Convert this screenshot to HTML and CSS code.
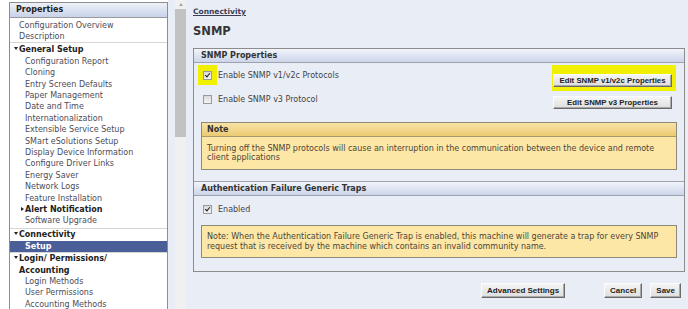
FILE: index.html
```html
<!DOCTYPE html>
<html lang="en">
<head>
    <meta charset="UTF-8" />
    <title>SNMP - Connectivity</title>
    <link rel="stylesheet" href="styles.css">
</head>
<body>

    <div class="side">
        <div class="side-box">
            <div class="side-title">Properties</div>

            <div class="side-sect sect-first">
                <a class="item">Configuration Overview</a>
                <a class="item">Description</a>
            </div>

            <div class="side-sect sect-general">
                <a class="grp">General Setup</a>
                <a class="item sub">Configuration Report</a>
                <a class="item sub">Cloning</a>
                <a class="item sub">Entry Screen Defaults</a>
                <a class="item sub">Paper Management</a>
                <a class="item sub">Date and Time</a>
                <a class="item sub">Internationalization</a>
                <a class="item sub">Extensible Service Setup</a>
                <a class="item sub">SMart eSolutions Setup</a>
                <a class="item sub">Display Device Information</a>
                <a class="item sub">Configure Driver Links</a>
                <a class="item sub">Energy Saver</a>
                <a class="item sub">Network Logs</a>
                <a class="item sub">Feature Installation</a>
                <a class="grp grp-closed">Alert Notification</a>
                <a class="item sub">Software Upgrade</a>
            </div>

            <div class="side-sect sect-tight">
                <a class="grp">Connectivity</a>
                <a class="item sub selected">Setup</a>
            </div>

            <div class="side-sect sect-tight">
                <a class="grp grp-wrap">Login/ Permissions/<br>Accounting</a>
                <a class="item sub">Login Methods</a>
                <a class="item sub">User Permissions</a>
                <a class="item sub">Accounting Methods</a>
            </div>
        </div>
    </div>

    <div class="gutter">
        <div class="scroll">
            <div class="scroll-up"></div>
            <div class="scroll-thumb"></div>
        </div>
    </div>

    <div class="main">
        <div class="crumb"><a href="#">Connectivity</a></div>
        <h1>SNMP</h1>

        <div class="panel">
            <div class="panel-head">SNMP Properties</div>
            <div class="panel-body">
                <div class="opt-row">
                    <label class="opt">
                        <span class="hl hl-box"><input type="checkbox" class="chk" checked></span>
                        <span class="opt-text">Enable SNMP v1/v2c Protocols</span>
                    </label>
                    <span class="hl hl-btn"><button class="btn btn-wide">Edit SNMP v1/v2c Properties</button></span>
                </div>
                <div class="opt-row row-second">
                    <label class="opt opt-plain">
                        <input type="checkbox" class="chk">
                        <span>Enable SNMP v3 Protocol</span>
                    </label>
                    <button class="btn btn-wide btn-second">Edit SNMP v3 Properties</button>
                </div>

                <div class="note">
                    <div class="note-head">Note</div>
                    <div class="note-body">Turning off the SNMP protocols will cause an interruption in the communication between the device and remote client applications</div>
                </div>
            </div>

            <div class="panel-head head-split">Authentication Failure Generic Traps</div>
            <div class="panel-body body-traps">
                <label class="opt opt-plain">
                    <input type="checkbox" class="chk" checked>
                    <span>Enabled</span>
                </label>

                <div class="note note-traps">
                    <div class="note-body">Note: When the Authentication Failure Generic Trap is enabled, this machine will generate a trap for every SNMP request that is received by the machine which contains an invalid community name.</div>
                </div>
            </div>
        </div>

        <div class="actions">
            <button class="btn btn-adv">Advanced Settings</button>
            <button class="btn btn-cancel">Cancel</button>
            <button class="btn btn-save">Save</button>
        </div>
    </div>

</body>
</html>
```
FILE: styles.css
```css
body {
    margin: 0;
    height: 100vh;
    overflow: hidden;
    display: flex;
    background-color: #e9edf6;
    font-family: "DejaVu Sans", Verdana, sans-serif;
    font-size: 8px;
    color: #444;
}

/* left navigation */
.side {
    flex-shrink: 0;
    width: 159px;
    padding: 2px 0 0 9px;
    background-color: #fff;
}

.side-box {
    box-sizing: border-box;
    height: 100%;
    border: 1px solid #8e8e8e;
    border-bottom: none;
}

.side-title {
    height: 14px;
    line-height: 14px;
    padding-left: 6px;
    font-weight: bold;
    color: #222;
    background: linear-gradient(#eef1f8, #c8d2e9);
    border-bottom: 1px solid #9a9a9a;
}

.sect-first {
    padding-top: 1.5px;
}

.side-sect + .side-sect {
    border-top: 1px solid #d6d6d6;
    padding-top: 1px;
}

.sect-general {
    padding-bottom: 1.5px;
}

.side-sect.sect-tight {
    padding-top: 0;
}

.item,
.grp {
    display: block;
    line-height: 11.4px;
    white-space: nowrap;
    cursor: pointer;
}

.item {
    padding-left: 9px;
    color: #4c4c58;
}

.item.sub {
    padding-left: 15px;
}

.item.selected {
    background-color: #4a5e98;
    color: #fff;
    font-weight: bold;
}

.grp {
    padding-left: 4px;
    font-weight: bold;
    color: #222;
}

.grp::before {
    content: "";
    display: inline-block;
    vertical-align: 2px;
    margin-right: 1px;
    border-left: 2px solid transparent;
    border-right: 2px solid transparent;
    border-top: 3px solid #222;
}

.grp-closed {
    padding-left: 11px;
}

.grp-closed::before {
    vertical-align: 1px;
    border-top: 2px solid transparent;
    border-bottom: 2px solid transparent;
    border-left: 3px solid #222;
    border-right: none;
}

.grp-wrap {
    padding-left: 9px;
    text-indent: -5px;
}

/* fake scrollbar between nav and content */
.gutter {
    flex-shrink: 0;
    padding: 0 7px;
}

.scroll {
    width: 11px;
    height: 100%;
    background-color: #f0f0f0;
}

.scroll-up {
    height: 9px;
    display: flex;
    justify-content: center;
    align-items: center;
}

.scroll-up::before {
    content: "";
    border-left: 2px solid transparent;
    border-right: 2px solid transparent;
    border-bottom: 3px solid #a6a6a6;
}

.scroll-thumb {
    height: 128px;
    background-color: #c2c2c2;
}

/* content */
.main {
    flex: 1;
    padding-right: 3px;
}

.crumb {
    padding-top: 6px;
    line-height: 11px;
    font-size: 7.5px;
    font-weight: bold;
}

.crumb a {
    color: #3d3d55;
}

h1 {
    margin: 7px 0 10px;
    font-size: 11.5px;
    line-height: 14px;
    color: #363636;
}

.panel {
    border: 1px solid #8c8c8c;
}

.panel-head {
    line-height: 13px;
    padding-left: 7px;
    font-weight: bold;
    color: #333;
    background: linear-gradient(#f2f4fa, #ccd5ea);
    border-bottom: 1px solid #9ea3ad;
}

.head-split {
    border-top: 1px solid #9ea3ad;
}

.panel-body {
    padding: 2px 7px 11px 4px;
}

.opt-row {
    display: flex;
    justify-content: space-between;
    align-items: flex-start;
    margin-right: 1px;
}

.row-second {
    margin-top: 4px;
}

.opt {
    display: flex;
    align-items: center;
    color: #444;
}

.opt-plain {
    padding-left: 5px;
}

.opt-text {
    margin-left: 1px;
}

.hl {
    background-color: #f0f000;
}

.hl-box {
    display: flex;
    padding: 6px 5px 5px 5px;
}

.hl-btn {
    display: flex;
    padding: 9px 4px 4px 1px;
}

.chk {
    appearance: none;
    box-sizing: border-box;
    position: relative;
    width: 9px;
    height: 9px;
    margin: 0 6px 0 0;
    border: 1px solid #9a9a9a;
    background: linear-gradient(#d9d9d9, #f4f4f4);
}

.hl-box .chk {
    margin: 0;
}

.chk:checked::after {
    content: "";
    position: absolute;
    left: 2px;
    top: 0;
    width: 2px;
    height: 4px;
    border-right: 1.5px solid #1e1e1e;
    border-bottom: 1.5px solid #1e1e1e;
    transform: rotate(40deg);
}

.btn {
    box-sizing: border-box;
    height: 15px;
    padding: 0 5px;
    font-family: "Liberation Sans", Arial, sans-serif;
    font-size: 8px;
    font-weight: bold;
    white-space: nowrap;
    color: #222;
    background: linear-gradient(#f5f5f5, #dedede);
    border: 1px solid;
    border-color: #fcfcfc #6b6b6b #6b6b6b #fcfcfc;
    box-shadow: inset -1px -1px 0 #a9a9a9;
    cursor: pointer;
}

.btn-wide {
    width: 119px;
    height: 13px;
    padding: 0;
    font-size: 7.8px;
}

.btn-second {
    margin: 1px 4px 0 0;
}

.note {
    margin: 13px 0 0 3px;
    border: 1px solid #8f8a78;
    background-color: #fde7a6;
}

.note-head {
    line-height: 13px;
    padding-left: 5px;
    font-weight: bold;
    color: #333;
    background: linear-gradient(#f7e3a6, #ecca72);
    border-bottom: 1px solid #a89a6c;
}

.note-body {
    padding: 6.5px 5px 6px;
    line-height: 9.5px;
    color: #4d4538;
}

.body-traps {
    padding-top: 9px;
    padding-bottom: 12.5px;
}

.note-traps {
    margin-top: 11px;
}

.actions {
    display: flex;
    justify-content: flex-end;
    margin: 11px 4px 0 0;
}

.btn-cancel {
    margin-left: 39px;
}

.btn-save {
    margin-left: 8px;
}
```
